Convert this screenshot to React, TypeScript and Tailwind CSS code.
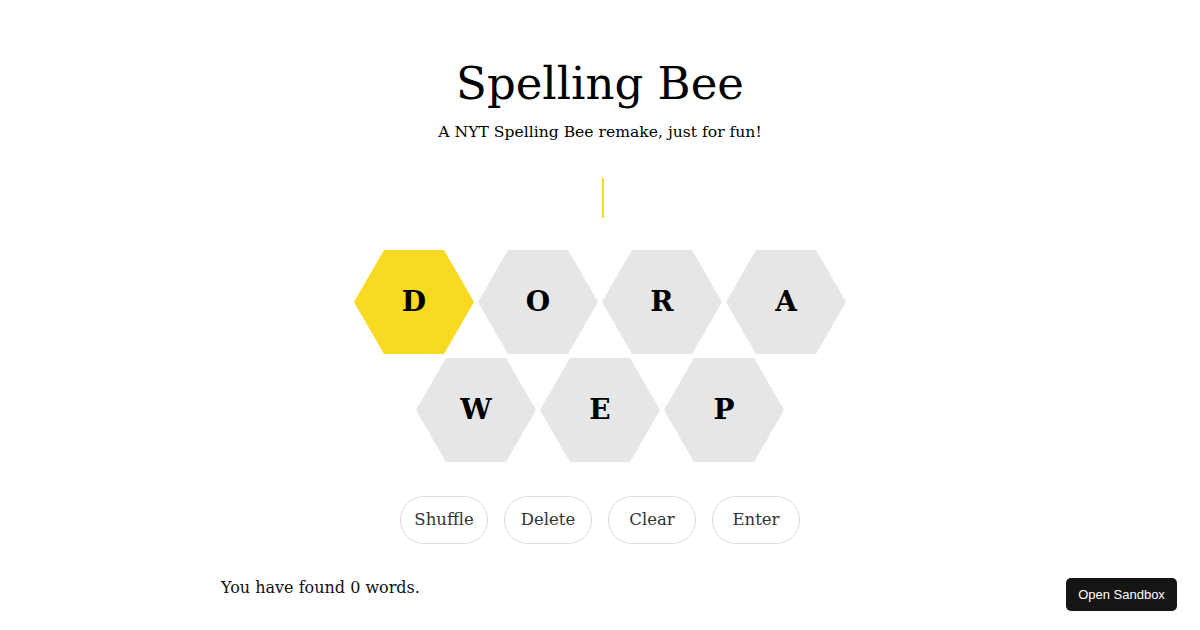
import React from "react";

const serif = { fontFamily: '"DejaVu Serif", "Liberation Serif", serif' };

function Hex({ letter, center }: { letter: string; center?: boolean }) {
  return (
    <div
      className={`w-[120px] h-[104px] flex items-center justify-center text-[28px] font-bold text-black ${
        center ? "bg-[#f7da21]" : "bg-[#e6e6e6]"
      } [clip-path:polygon(25%_0,75%_0,100%_50%,75%_100%,25%_100%,0_50%)]`}
    >
      {letter}
    </div>
  );
}

export default function App() {
  return (
    <div className="min-h-[630px] w-full bg-white text-black relative" style={serif}>
      <div className="flex flex-col items-center pt-[52px]">
        <h1 className="text-[45px] font-light leading-[64px]">Spelling Bee</h1>
        <p className="text-[15.6px] leading-[20px] mt-[6px]">A NYT Spelling Bee remake, just for fun!</p>
        <div className="h-[40px] mt-[36px] flex items-center">
          <div className="w-[2px] h-[40px] bg-[#f7da21] ml-[6px]" />
        </div>
        <div className="mt-[32px] flex flex-col items-center gap-[4px]">
          <div className="flex gap-[4px]">
            <Hex letter="D" center />
            <Hex letter="O" />
            <Hex letter="R" />
            <Hex letter="A" />
          </div>
          <div className="flex gap-[4px]">
            <Hex letter="W" />
            <Hex letter="E" />
            <Hex letter="P" />
          </div>
        </div>
        <div className="mt-[34px] flex gap-[16px]">
          {["Shuffle", "Delete", "Clear", "Enter"].map((b) => (
            <button
              key={b}
              className="w-[88px] h-[48px] rounded-full border border-[#dcdcdc] bg-white text-[16.5px] text-[#333]"
            >
              {b}
            </button>
          ))}
        </div>
        <div className="w-[758px] mt-[32px] text-[16px] leading-[24px] text-[#111]">
          You have found 0 words.
        </div>
      </div>
      <div
        className="absolute right-[23px] top-[578px] w-[111px] h-[33px] rounded-[5px] bg-[#151515] text-white text-[13px] flex items-center justify-center"
        style={{ fontFamily: '"Liberation Sans", Arial, sans-serif' }}
      >
        Open Sandbox
      </div>
    </div>
  );
}
